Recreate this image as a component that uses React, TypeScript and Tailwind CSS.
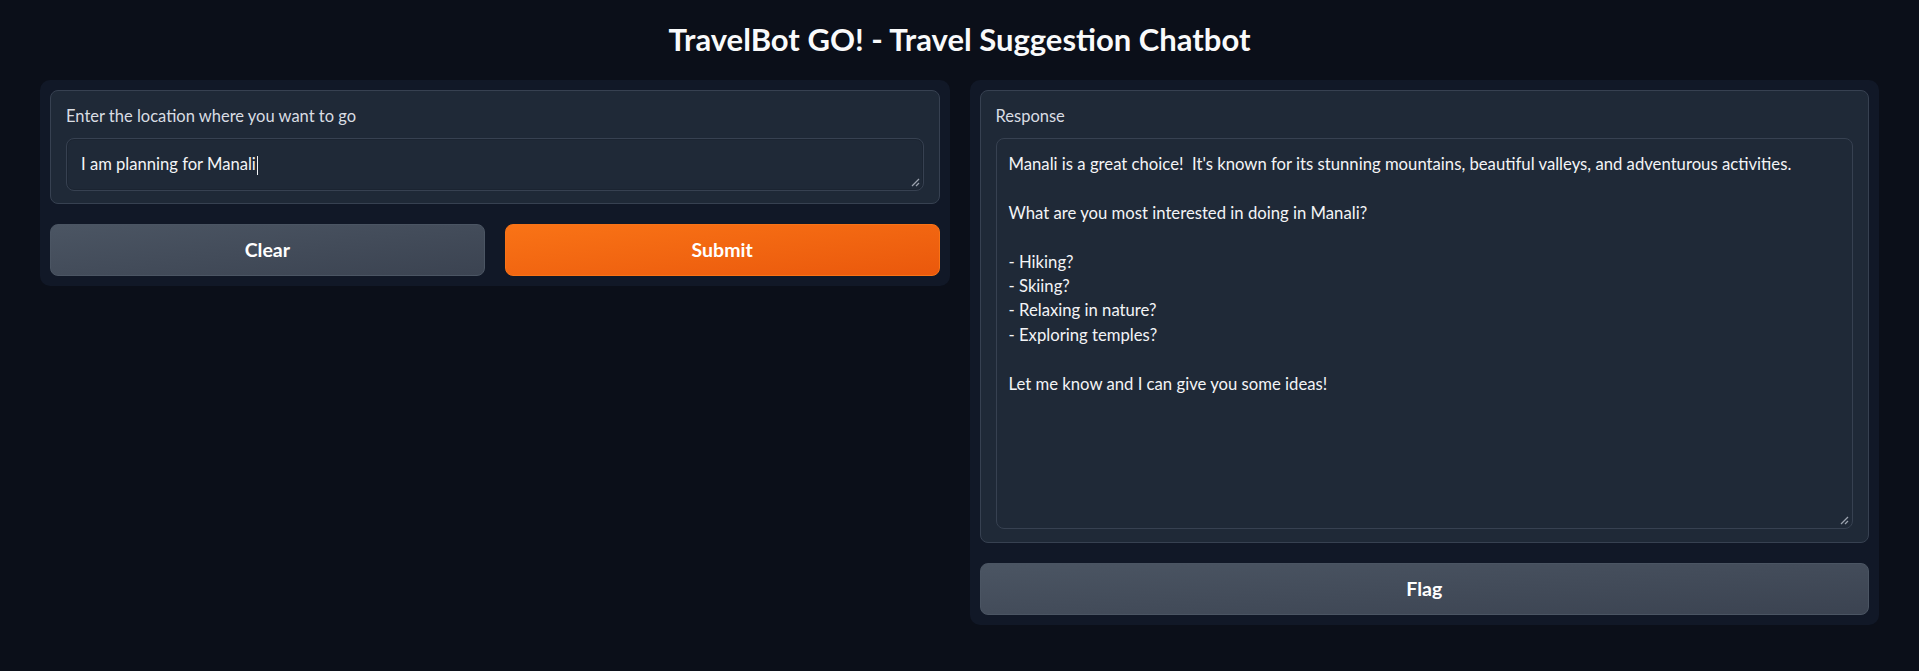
import React from "react";

const font = { fontFamily: "Lato, 'Noto Sans', sans-serif" };

function Grip() {
  return (
    <svg
      className="absolute bottom-[3px] right-[3px]"
      width="9"
      height="9"
      viewBox="0 0 9 9"
    >
      <line x1="8" y1="1" x2="1" y2="8" stroke="#9ca3af" strokeWidth="1.3" />
      <line x1="8" y1="5" x2="5" y2="8" stroke="#9ca3af" strokeWidth="1.3" />
    </svg>
  );
}

const responseLines = [
  "Manali is a great choice!  It's known for its stunning mountains, beautiful valleys, and adventurous activities.",
  "",
  "What are you most interested in doing in Manali?",
  "",
  "- Hiking?",
  "- Skiing?",
  "- Relaxing in nature?",
  "- Exploring temples?",
  "",
  "Let me know and I can give you some ideas!",
];

export default function App() {
  return (
    <div
      className="min-h-screen w-full bg-[#0b0f19] px-10 text-[#e5e7eb]"
      style={font}
    >
      <h1 className="pt-[19px] pb-[20px] text-center text-[31px] font-bold leading-[41px] text-[#f9fafb]">
        TravelBot GO! - Travel Suggestion Chatbot
      </h1>
      <div className="grid grid-cols-2 items-start gap-5">
        {/* Left panel */}
        <div className="flex flex-col gap-5 rounded-[10px] bg-[#111827] p-[10px]">
          <div className="flex flex-col rounded-lg border border-[#374151] bg-[#1f2937] px-[15px] pt-[13px] pb-[12px]">
            <div className="h-6 text-[16.5px] leading-6 text-[#d9dde3]">
              Enter the location where you want to go
            </div>
            <div className="relative mt-[10px] h-[53px] rounded-lg border border-[#374151] bg-[#1f2937] px-[14px] py-[13px] text-[16.6px] leading-[25px] text-[#f3f4f6] shadow-[inset_0_0_0_1px_rgba(0,0,0,0.1)]">
              <span>I am planning for Manali</span>
              <span className="ml-[1px] mb-[-5px] inline-block h-[19px] w-px align-baseline bg-[#f3f4f6]" />
              <Grip />
            </div>
          </div>
          <div className="grid grid-cols-2 gap-5">
            <button className="h-[52px] rounded-lg border border-[#4b5563] bg-gradient-to-br from-[#4b5563] to-[#3b4351] text-[19.5px] font-bold text-white">
              Clear
            </button>
            <button className="h-[52px] rounded-lg border border-[#f97316] bg-gradient-to-br from-[#f97316] to-[#ea580c] text-[19.5px] font-bold text-white">
              Submit
            </button>
          </div>
        </div>

        {/* Right panel */}
        <div className="flex flex-col gap-5 rounded-[10px] bg-[#111827] p-[10px]">
          <div className="flex flex-col rounded-lg border border-[#374151] bg-[#1f2937] px-[15px] pt-[13px] pb-[13px]">
            <div className="h-6 text-[16.5px] leading-6 text-[#d9dde3]">Response</div>
            <div className="relative mt-[10px] h-[391px] rounded-lg border border-[#374151] bg-[#1f2937] px-[12px] pt-[1px] text-[16.7px] leading-[24.4px] text-[#f3f4f6]">
              <div className="pt-[12px]">
                {responseLines.map((l, i) => (
                  <div key={i} className="min-h-[24.4px] whitespace-pre">
                    {l}
                  </div>
                ))}
              </div>
              <Grip />
            </div>
          </div>
          <button className="h-[52px] rounded-lg border border-[#4b5563] bg-gradient-to-br from-[#4b5563] to-[#3b4351] text-[19.5px] font-bold text-white">
            Flag
          </button>
        </div>
      </div>
    </div>
  );
}
